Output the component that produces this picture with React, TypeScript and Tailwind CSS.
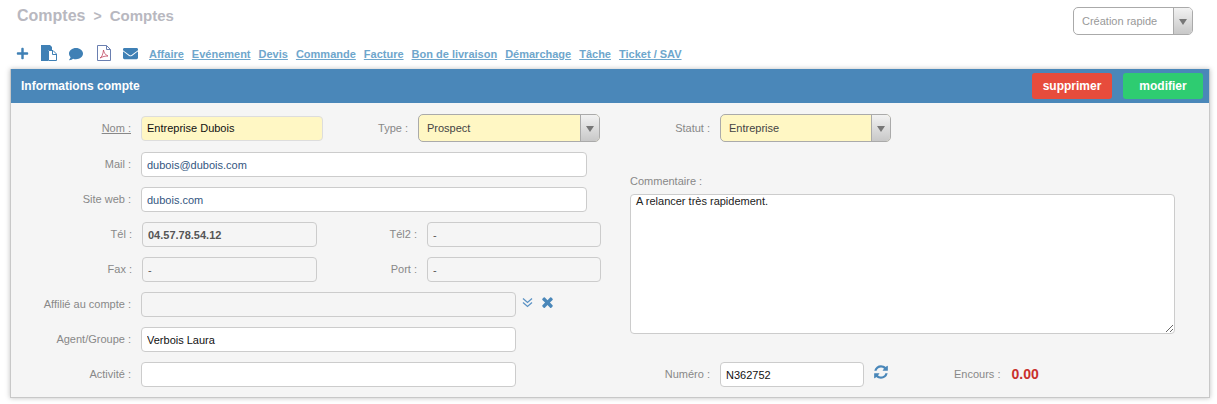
import { FaComment, FaEnvelope, FaPlus } from 'react-icons/fa';

const links = ['Affaire', 'Evénement', 'Devis', 'Commande', 'Facture', 'Bon de livraison', 'Démarchage', 'Tâche', 'Ticket / SAV'];

const inputCls = 'h-[25px] rounded-[4px] border border-[#ccc] px-[5px] text-[11px] outline-none';

function Label({ text, className }: { text: string; className: string }) {
  return <label className={`shrink-0 pr-[10px] text-right text-[11px] text-[#888] ${className}`}>{text}</label>;
}

function Select({ value, width, yellow }: { value: string; width: string; yellow?: boolean }) {
  return (
    <div className={`flex h-[28px] overflow-hidden rounded-[5px] border border-[#aaa] ${width} ${yellow ? 'bg-[#fff7c4] text-[#444]' : 'bg-white text-[#999]'}`}>
      <span className="flex-1 truncate pl-[8px] text-[11px] leading-[26px]">{value}</span>
      <span className="flex w-[19px] items-center justify-center border-l border-[#aaa] bg-gradient-to-b from-[#f2f2f2] to-[#c8c8c8]">
        <span className="mt-[1px] h-0 w-0 border-x-[4px] border-t-[6px] border-x-transparent border-t-[#777]" />
      </span>
    </div>
  );
}

export default function App() {
  return (
    <div className="h-[404px] w-[1217px] overflow-hidden bg-white font-['Liberation_Sans',Arial,sans-serif]">
      <div className="flex h-[44px] items-start justify-between pr-[24px] pl-[17px] pt-[7px]">
        <h1 className="flex items-baseline text-[16px] leading-[18px] font-bold text-[#b8b8c0]">
          Comptes<span className="ml-[8px] mr-[8px] text-[14px]">&gt;</span><span className="text-[15px]">Comptes</span>
        </h1>
        <Select value="Création rapide" width="w-[120px]" />
      </div>

      <div className="flex h-[25px] items-start pl-[16px] pt-[1px] text-[#3f80b5]">
        <FaPlus className="mt-[2px] mr-[12px] h-[13px] w-[13px]" />
        <svg viewBox="0 0 16 16" className="mr-[11px] h-[16px] w-[16px]">
          <path d="M0 0h9l2 2v3H7v11H0z" fill="#3f80b5" />
          <path d="M7.500 5.500h4.500l3.500 3.500v6.500h-8z" fill="#fff" stroke="#3f80b5" />
          <path d="M11.500 5.500v4h4" fill="none" stroke="#3f80b5" />
        </svg>
        <FaComment className="mt-[2px] mr-[13px] h-[14px] w-[16px]" />
        <svg viewBox="0 0 14 16" className="mr-[11px] h-[16px] w-[14px]" fill="none">
          <path d="M.5.500h9l4 4v11H.5z" stroke="#6a7fb0" />
          <path d="M9.500.500v4h4" stroke="#6a7fb0" />
          <path d="M3 13c2-1 3-4 3.500-8 .5 3 2 5 4.500 6-3 0-5 .5-8 2z" stroke="#c0475f" strokeWidth=".8" />
        </svg>
        <FaEnvelope className="mt-[1px] mr-[10px] h-[15px] w-[17px]" />
        <div className="flex gap-[8px] pt-[2px]">
          {links.map((l) => (
            <a key={l} className="text-[11px] leading-[14px] font-bold text-[#6ea6cc] underline">{l}</a>
          ))}
        </div>
      </div>

      <section className="ml-[10px] h-[329px] w-[1200px] border-x border-b border-[#c8c8c8] bg-[#f5f5f5] shadow-[0_0_5px_rgba(0,0,0,0.25)]">
        <header className="flex h-[34px] items-center justify-between bg-[#4a87b9] pr-[6px] pl-[10px]">
          <h2 className="text-[12px] font-bold text-white">Informations compte</h2>
          <div className="flex gap-[11px]">
            <button className="h-[26px] w-[80px] rounded-[3px] bg-[#e74c3c] text-[12px] font-bold text-white">supprimer</button>
            <button className="h-[26px] w-[80px] rounded-[3px] bg-[#2ecc71] text-[12px] font-bold text-white">modifier</button>
          </div>
        </header>

        <div className="flex pt-[11px]">
          <div className="flex w-[600px] shrink-0 flex-col gap-[10px]">
            <div className="flex h-[28px] items-center">
              <Label text="Nom :" className="w-[130px] underline" />
              <input readOnly defaultValue="Entreprise Dubois" className={`${inputCls} w-[182px] border-[#ddd] bg-[#fff7c4] text-[#111]`} />
              <Label text="Type :" className="w-[95px]" />
              <Select value="Prospect" width="w-[182px]" yellow />
            </div>
            <div className="flex items-center">
              <Label text="Mail :" className="w-[130px]" />
              <input readOnly defaultValue="dubois@dubois.com" className={`${inputCls} w-[446px] bg-white text-[#33567f]`} />
            </div>
            <div className="flex items-center">
              <Label text="Site web :" className="w-[130px]" />
              <input readOnly defaultValue="dubois.com" className={`${inputCls} w-[446px] bg-white text-[#33567f]`} />
            </div>
            <div className="flex items-center">
              <Label text="Tél :" className="w-[131px]" />
              <input readOnly defaultValue="04.57.78.54.12" className={`${inputCls} w-[175px] bg-[#f5f5f5] font-bold text-[#555]`} />
              <Label text="Tél2 :" className="w-[110px]" />
              <input readOnly defaultValue="-" className={`${inputCls} w-[174px] bg-[#f5f5f5] text-[#555]`} />
            </div>
            <div className="flex items-center">
              <Label text="Fax :" className="w-[131px]" />
              <input readOnly defaultValue="-" className={`${inputCls} w-[175px] bg-[#f5f5f5] text-[#555]`} />
              <Label text="Port :" className="w-[110px]" />
              <input readOnly defaultValue="-" className={`${inputCls} w-[174px] bg-[#f5f5f5] text-[#555]`} />
            </div>
            <div className="flex items-center">
              <Label text="Affilié au compte :" className="w-[130px]" />
              <input readOnly className={`${inputCls} w-[375px] bg-[#f5f5f5]`} />
              <svg viewBox="0 0 11 11" fill="none" stroke="#5b92c4" strokeWidth="1.300" className="mt-[-4px] ml-[6px] h-[11px] w-[11px]">
                <path d="M1 1.500l4.500 4 4.500-4M1 5.500l4.500 4 4.500-4" />
              </svg>
              <svg viewBox="0 0 1408 1792" fill="#4a87b9" className="mt-[-4px] ml-[8px] h-[16px] w-[13px]">
                <path d="M1298 1214q0 40-28 68l-136 136q-28 28-68 28t-68-28l-294-294-294 294q-28 28-68 28t-68-28l-136-136q-28-28-28-68t28-68l294-294-294-294q-28-28-28-68t28-68l136-136q28-28 68-28t68 28l294 294 294-294q28-28 68-28t68 28l136 136q28 28 28 68t-28 68l-294 294 294 294q28 28 28 68z" />
              </svg>
            </div>
            <div className="flex items-center">
              <Label text="Agent/Groupe :" className="w-[130px]" />
              <input readOnly defaultValue="Verbois Laura" className={`${inputCls} w-[375px] bg-white text-[#111]`} />
            </div>
            <div className="flex items-center">
              <Label text="Activité :" className="w-[130px]" />
              <input readOnly className={`${inputCls} w-[375px] bg-white`} />
            </div>
          </div>

          <div className="flex flex-1 flex-col">
            <div className="flex h-[28px] items-center">
              <Label text="Statut :" className="w-[109px]" />
              <Select value="Entreprise" width="w-[171px]" yellow />
            </div>
            <p className="mt-[32px] ml-[19px] text-[11px] leading-[14px] text-[#888]">Commentaire :</p>
            <textarea
              readOnly
              defaultValue="A relancer très rapidement."
              className="mt-[6px] ml-[19px] h-[140px] w-[545px] rounded-[4px] border border-[#ccc] bg-white px-[5px] text-[11px] leading-[12px] text-[#222] outline-none"
            />
            <div className="mt-[28px] flex items-center">
              <Label text="Numéro :" className="w-[109px]" />
              <input readOnly defaultValue="N362752" className={`${inputCls} w-[144px] bg-white text-[#111]`} />
              <svg viewBox="0 0 1792 1792" fill="#4a87b9" className="mt-[-6px] ml-[9px] h-[16px] w-[16px]">
                <path d="M1639 1056q0 5-1 7-64 268-268 434.500t-478 166.500q-146 0-282.500-55t-243.500-157l-129 129q-19 19-45 19t-45-19-19-45v-448q0-26 19-45t45-19h448q26 0 45 19t19 45-19 45l-137 137q71 66 161 102t187 36q134 0 250-65t186-179q11-17 53-117 8-23 30-23h192q13 0 22.500 9.500t9.500 22.500zm25-800v448q0 26-19 45t-45 19h-448q-26 0-45-19t-19-45 19-45l138-138q-148-137-349-137-134 0-250 65t-186 179q-11 17-53 117-8 23-30 23h-199q-13 0-22.500-9.500t-9.500-22.500v-7q65-268 270-434.500t480-166.500q146 0 284 55.500t245 156.500l130-129q19-19 45-19t45 19 19 45z" />
              </svg>
              <span className="ml-[65px] text-[11px] text-[#888]">Encours :</span>
              <span className="ml-[11px] text-[14px] font-bold text-[#c9302c]">0.00</span>
            </div>
          </div>
        </div>
      </section>
    </div>
  );
}
